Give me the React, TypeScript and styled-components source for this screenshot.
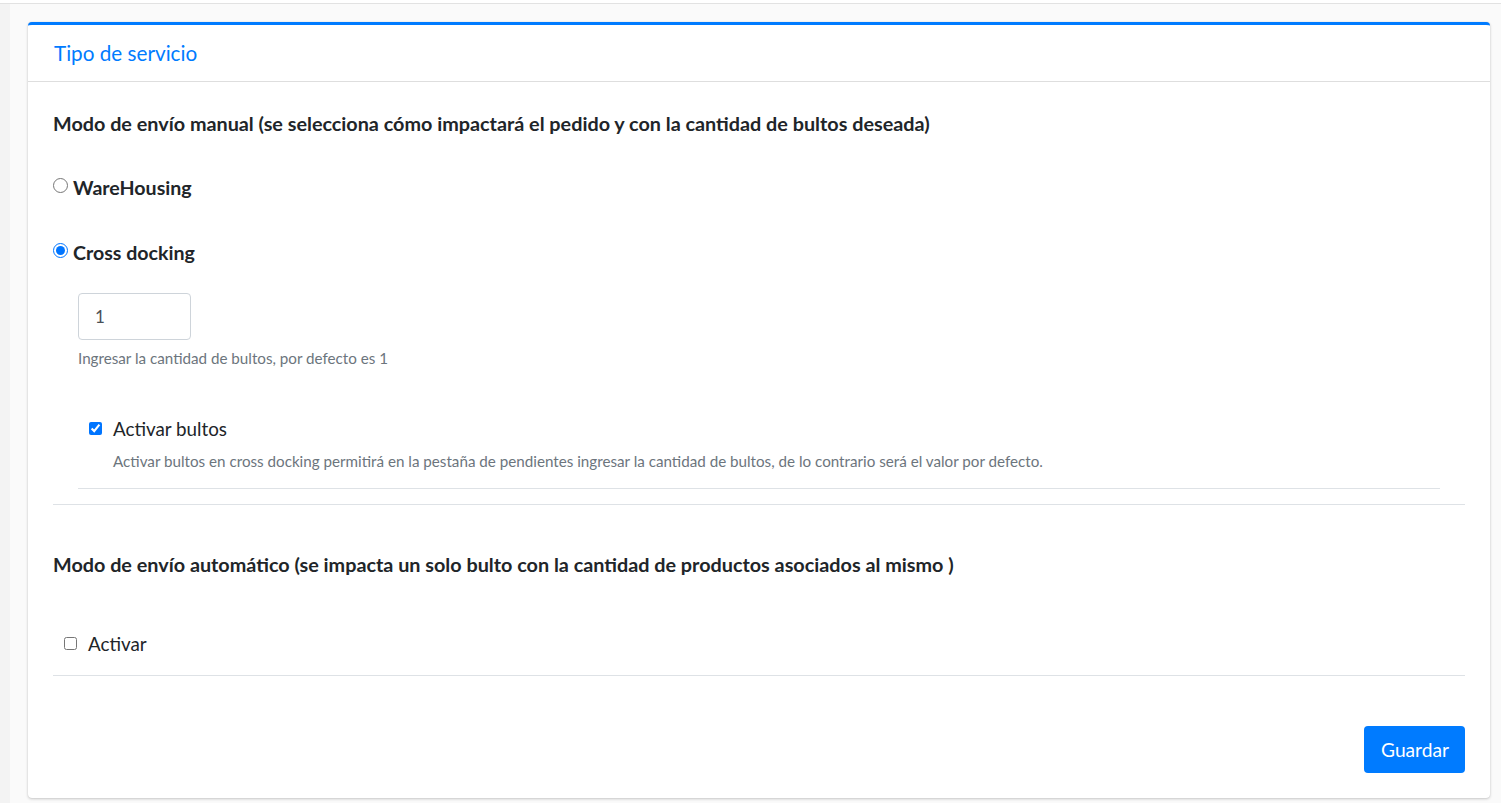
import React from "react";
import styled, { createGlobalStyle } from "styled-components";

const GlobalStyle = createGlobalStyle`
  html, body {
    margin: 0;
    padding: 0;
    background: #f8f8f8;
  }
  body {
    font-family: Lato, "Noto Sans", "Liberation Sans", sans-serif;
    color: #212529;
  }
  * {
    box-sizing: border-box;
  }
`;

const Page = styled.div`
  min-height: 803px;
  border-left: 10px solid #f3f3f3;
  background: #fafafa;
`;

const TopStrip = styled.div`
  height: 4px;
  margin-left: -10px;
  background: #ffffff;
  border-bottom: 1px solid #e2e2e2;
`;

const Content = styled.div`
  padding: 18px 11px 5px 18px;
`;

const Card = styled.section`
  background: #ffffff;
  border-top: 3px solid #007bff;
  border-radius: 4px;
  box-shadow: 0 0 1px rgba(0, 0, 0, 0.125), 0 1px 3px rgba(0, 0, 0, 0.2);
`;

const CardHeader = styled.header`
  height: 57px;
  display: flex;
  align-items: center;
  padding: 0 26px;
  border-bottom: 1px solid #dedede;
`;

const CardTitle = styled.h3`
  margin: 0;
  font-size: 20.7px;
  font-weight: 400;
  color: #007bff;
`;

const CardBody = styled.div`
  display: flex;
  flex-direction: column;
  padding: 0 25px 25px;
`;

const SectionTitle = styled.h5<{ $top: number }>`
  margin: ${(p) => p.$top}px 0 0;
  font-size: 19.8px;
  line-height: 24px;
  font-weight: 700;
  color: #212529;
`;

const RadioRow = styled.label<{ $top: number }>`
  display: flex;
  align-items: center;
  gap: 5px;
  margin-top: ${(p) => p.$top}px;
  height: 24px;
  font-size: 19.6px;
  font-weight: 700;
  cursor: pointer;

  input {
    margin: 0 0 3px;
    width: 15px;
    height: 15px;
  }
`;

const Indented = styled.div`
  display: flex;
  flex-direction: column;
  padding: 0 25px;
`;

const NumberInput = styled.input`
  margin-top: 29px;
  width: 113px;
  height: 47px;
  padding: 0 16px;
  border: 1px solid #ced4da;
  border-radius: 4px;
  font-family: inherit;
  font-size: 17px;
  color: #495057;
  outline: none;
`;

const Help = styled.small<{ $top: number; $left?: number }>`
  display: block;
  margin-top: ${(p) => p.$top}px;
  margin-left: ${(p) => p.$left ?? 0}px;
  font-size: 15.2px;
  line-height: 20px;
  color: #6c757d;
`;

const CheckGroup = styled.div<{ $top: number; $indent: number; $bottom: number }>`
  display: flex;
  flex-direction: column;
  margin-top: ${(p) => p.$top}px;
  padding-left: ${(p) => p.$indent}px;
  padding-bottom: ${(p) => p.$bottom}px;
  border-bottom: 1px solid #dee2e6;
`;

const CheckRow = styled.label`
  display: flex;
  align-items: center;
  gap: 11px;
  height: 24px;
  font-size: 18.8px;
  cursor: pointer;

  input {
    margin: 0;
    width: 13px;
    height: 13px;
  }
`;

const Divider = styled.hr<{ $top: number }>`
  margin: ${(p) => p.$top}px 0 0;
  border: 0;
  border-top: 1px solid #dee2e6;
`;

const Footer = styled.div`
  display: flex;
  justify-content: flex-end;
  margin-top: 50px;
`;

const SaveButton = styled.button`
  height: 47px;
  padding: 0 16px 0 17px;
  border: 0;
  border-radius: 4px;
  background: #007bff;
  color: #ffffff;
  font-family: inherit;
  font-size: 19.2px;
  cursor: pointer;
`;

export default function App() {
  return (
    <>
      <GlobalStyle />
      <Page>
        <TopStrip />
        <Content>
          <Card>
            <CardHeader>
              <CardTitle>Tipo de servicio</CardTitle>
            </CardHeader>
            <CardBody>
              <SectionTitle $top={29}>
                Modo de envío manual (se selecciona cómo impactará el pedido y con la cantidad de bultos deseada)
              </SectionTitle>
              <RadioRow $top={40}>
                <input type="radio" name="modo" />
                WareHousing
              </RadioRow>
              <RadioRow $top={41}>
                <input type="radio" name="modo" defaultChecked />
                Cross docking
              </RadioRow>
              <Indented>
                <NumberInput type="text" defaultValue="1" />
                <Help $top={8}>Ingresar la cantidad de bultos, por defecto es 1</Help>
                <CheckGroup $top={48} $indent={11} $bottom={17}>
                  <CheckRow>
                    <input type="checkbox" defaultChecked />
                    Activar bultos
                  </CheckRow>
                  <Help $top={11} $left={24}>
                    Activar bultos en cross docking permitirá en la pestaña de pendientes ingresar la cantidad de bultos, de lo contrario será el valor por defecto.
                  </Help>
                </CheckGroup>
              </Indented>
              <Divider $top={15} />
              <SectionTitle $top={47}>
                Modo de envío automático (se impacta un solo bulto con la cantidad de productos asociados al mismo )
              </SectionTitle>
              <CheckGroup $top={55} $indent={11} $bottom={20}>
                <CheckRow>
                  <input type="checkbox" />
                  Activar
                </CheckRow>
              </CheckGroup>
              <Footer>
                <SaveButton type="button">Guardar</SaveButton>
              </Footer>
            </CardBody>
          </Card>
        </Content>
      </Page>
    </>
  );
}
